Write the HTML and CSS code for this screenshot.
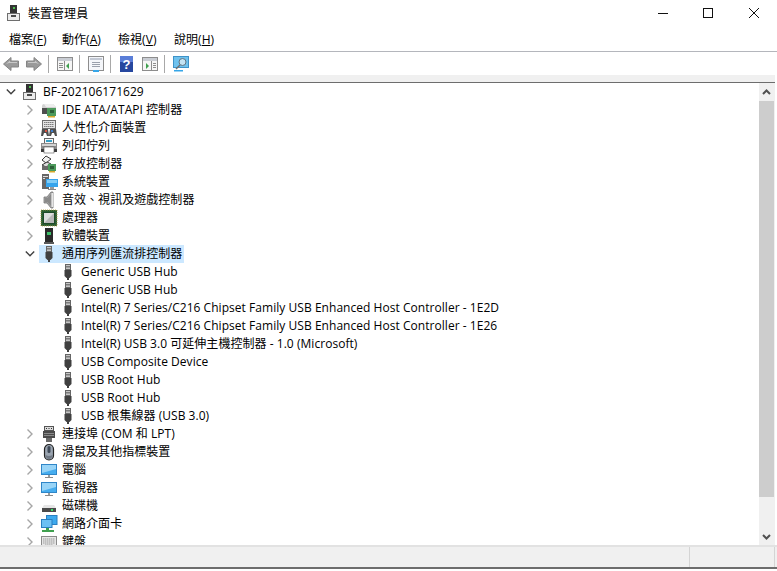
FILE: index.html
```html
<!DOCTYPE html>
<html lang="zh-Hant">
<head>
<meta charset="utf-8">
<title>裝置管理員</title>
<link rel="stylesheet" href="styles.css">
</head>
<body>
<svg class="defs" width="0" height="0" aria-hidden="true">
  <defs>
    <symbol id="i-pc" viewBox="0 0 16 16">
      <rect x="3" y="0" width="7" height="9" fill="#333"/>
      <rect x="6" y="2" width="2" height="2" fill="#4fc04f"/>
      <rect x="0" y="8" width="13" height="8" fill="#6e6e6e"/>
      <rect x="1" y="9" width="11" height="6" fill="#ececec"/>
      <rect x="4" y="10" width="5" height="2" fill="#4a4a4a"/>
    </symbol>
    <symbol id="i-usb" viewBox="0 0 18 18">
      <rect x="6.500" y="1.500" width="5" height="5" fill="#c4c4c4" stroke="#666"/>
      <rect x="7.500" y="3" width="1" height="1.500" fill="#333"/>
      <rect x="9.500" y="3" width="1" height="1.500" fill="#333"/>
      <path d="M5.500 7h7v6l-2 2h-3l-2-2z" fill="#404040"/>
      <rect x="8" y="15" width="2" height="2" fill="#404040"/>
    </symbol>
    <symbol id="i-ide" viewBox="0 0 18 18">
      <path d="M2 5q0-2 2-2h9l3 3v1H5v6H2z" fill="#d2d2d2"/>
      <path d="M4 3h9l3 3H6z" fill="#eee"/>
      <rect x="2" y="7" width="7" height="6" fill="#4f4f4f"/>
      <rect x="7" y="7" width="9" height="8" fill="#4d9a5c"/>
      <rect x="10" y="9" width="4" height="3" fill="#2c5f37"/>
      <rect x="8" y="15" width="7" height="1.500" fill="#d8a92c"/>
    </symbol>
    <symbol id="i-hid" viewBox="0 0 18 18">
      <rect x="2.500" y="1.500" width="13" height="8" fill="#e4e4e4" stroke="#6e6e6e"/>
      <path d="M4 3.500h10M4 5.500h10M4 7.500h10" stroke="#7c7c7c" stroke-dasharray="1.500 .5"/>
      <path d="M1 17l1-7h6l1 7H7l-1-3H4l-1 3z" fill="#4f4f4f"/>
      <path d="M9 17l1-7h6l1 7h-2l-1-3h-2l-1 3z" fill="#4f4f4f"/>
      <rect x="5" y="11" width="2" height="2" fill="#d8503c"/>
      <rect x="11" y="11" width="2" height="2" fill="#3f7fd0"/>
    </symbol>
    <symbol id="i-printer" viewBox="0 0 18 18">
      <rect x="4.500" y="1.500" width="9" height="5" fill="#f6f6f6" stroke="#666"/>
      <rect x="6" y="3" width="6" height="2" fill="#36a0c8"/>
      <rect x="1" y="6" width="16" height="8" fill="#8a8a8a"/>
      <rect x="2" y="7" width="14" height="2" fill="#d2d2d2"/>
      <rect x="1" y="12" width="16" height="3" fill="#3c3c3c"/>
      <rect x="4" y="10" width="10" height="6" fill="#fff" stroke="#555" stroke-width=".6"/>
    </symbol>
    <symbol id="i-storage" viewBox="0 0 18 18">
      <path d="M6 1l5 3-5 4-4-3z" fill="#f2f2f2" stroke="#3a3a3a"/>
      <path d="M2 10l5-3 4 2-5 3z" fill="#dcdcdc" stroke="#3a3a3a"/>
      <rect x="2" y="11" width="6" height="4" fill="#6a6a6a"/>
      <rect x="8" y="9" width="8" height="7" fill="#4d9a5c"/>
      <rect x="10" y="11" width="4" height="3" fill="#2c5f37"/>
      <rect x="9" y="16" width="6" height="1.500" fill="#d8a92c"/>
    </symbol>
    <symbol id="i-system" viewBox="0 0 18 18">
      <rect x="2" y="1" width="7" height="15" fill="#666"/>
      <rect x="3" y="3" width="5" height="1" fill="#ddd"/>
      <rect x="3" y="5" width="2" height="1" fill="#ddd"/>
      <rect x="6" y="6" width="12" height="8" fill="#36a4ec"/>
      <rect x="7" y="7" width="10" height="3" fill="#82cdf6"/>
      <rect x="10" y="14" width="4" height="2" fill="#9a9a9a"/>
      <rect x="8" y="16" width="8" height="1" fill="#888"/>
    </symbol>
    <symbol id="i-speaker" viewBox="0 0 18 18">
      <path d="M4 6h3l4-5h2v16h-2l-4-5H4z" fill="#a5a5a5" stroke="#777" stroke-width=".8"/>
      <path d="M5 7h2.500L11 3v12l-3.500-4H5z" fill="#8a8a8a"/>
      <rect x="11.500" y="2" width="1.500" height="14" fill="#e6e6e6"/>
    </symbol>
    <symbol id="i-cpu" viewBox="0 0 18 18">
      <rect x="1" y="1" width="16" height="16" fill="#2c5e34"/>
      <rect x="1" y="1" width="16" height="16" fill="none" stroke="#b09a3a" stroke-width=".8" stroke-dasharray="1 1"/>
      <rect x="3" y="3" width="12" height="12" fill="#1f4a28"/>
      <rect x="4" y="4" width="10" height="10" fill="#dedede"/>
      <path d="M4 14L14 4v10z" fill="#b8b8b8"/>
    </symbol>
    <symbol id="i-soft" viewBox="0 0 18 18">
      <rect x="5" y="1" width="8" height="14" fill="#2a2a2a"/>
      <rect x="7" y="5" width="4" height="3" fill="#3fc06a"/>
      <rect x="4" y="15" width="10" height="2" fill="#5a5a5a"/>
    </symbol>
    <symbol id="i-port" viewBox="0 0 18 18">
      <rect x="4.500" y="1.500" width="9" height="4" fill="#dcdcdc" stroke="#555"/>
      <path d="M6 3.500h1M8.500 3.500h1M11 3.500h1" stroke="#333"/>
      <rect x="3" y="6" width="12" height="7" fill="#4b4b4b"/>
      <path d="M4 8.500h10M4 10.500h10" stroke="#8a8a8a"/>
      <rect x="6" y="13" width="6" height="4" fill="#6a6a6a"/>
    </symbol>
    <symbol id="i-mouse" viewBox="0 0 18 18">
      <rect x="4.500" y="1.500" width="9" height="15.500" rx="4.500" fill="#9aa4b0" stroke="#222" stroke-width="1.200"/>
      <rect x="7.500" y="3" width="3" height="7" rx="1.500" fill="#3f4a58"/>
      <path d="M5.500 12q3.500 2 7 0v1q-1 3-3.500 3t-3.500-3z" fill="#6f7884"/>
    </symbol>
    <symbol id="i-monitor" viewBox="0 0 18 18">
      <rect x="1.500" y="3.500" width="15" height="10" fill="#46adef" stroke="#2f86c8"/>
      <path d="M2 4h14v4L2 12z" fill="#98d4f7"/>
      <rect x="8" y="14" width="2" height="2" fill="#9a9a9a"/>
      <rect x="5" y="16" width="8" height="1" fill="#8a8a8a"/>
    </symbol>
    <symbol id="i-disk" viewBox="0 0 18 18">
      <path d="M4 8h10l2 3v4H2v-4z" fill="#e6e6e6"/>
      <rect x="2" y="11" width="14" height="4" fill="#4a4a4a"/>
      <rect x="11" y="12" width="2" height="2" fill="#3fe06a"/>
    </symbol>
    <symbol id="i-net" viewBox="0 0 18 18">
      <rect x="6.500" y="0.500" width="10.500" height="9" fill="#3da9ee" stroke="#2b7fc0"/>
      <rect x="1.500" y="4.500" width="10.500" height="8" fill="#6cc0f3" stroke="#2b7fc0"/>
      <rect x="6" y="13" width="3" height="2" fill="#3fa04f"/>
      <rect x="2" y="15" width="12" height="2" fill="#3fa04f"/>
    </symbol>
    <symbol id="i-kbd" viewBox="0 0 18 18">
      <rect x="1.500" y="3.500" width="15" height="11" fill="#e6e6e6" stroke="#8a8a8a"/>
      <path d="M3 6h12M3 8h12M3 10h12M5 12h8" stroke="#9a9a9a" stroke-dasharray="1.500 .5"/>
    </symbol>
    <symbol id="i-right" viewBox="0 0 10 10"><path d="M2.500 .5L7 5 2.500 9.500" fill="none" stroke="#a6a6a6" stroke-width="1.400"/></symbol>
    <symbol id="i-down" viewBox="0 0 10 10"><path d="M.8 2.500L5 6.700l4.200-4.200" fill="none" stroke="#404040" stroke-width="1.400"/></symbol>
  </defs>
</svg>

<div class="window">
  <header class="titlebar">
    <svg class="title-icon"><use href="#i-pc"/></svg>
    <span class="title-text">裝置管理員</span>
    <div class="controls">
      <svg class="ctl" viewBox="0 0 46 29"><path d="M19 13.500h10" stroke="#111" fill="none"/></svg>
      <svg class="ctl" viewBox="0 0 46 29"><rect x="18.500" y="8.500" width="9" height="9" stroke="#111" fill="none"/></svg>
      <svg class="ctl" viewBox="0 0 46 29"><path d="M18 8l10 10M28 8L18 18" stroke="#111" fill="none"/></svg>
    </div>
  </header>

  <nav class="menubar">
    <span class="menu">檔案(<u>F</u>)</span>
    <span class="menu">動作(<u>A</u>)</span>
    <span class="menu">檢視(<u>V</u>)</span>
    <span class="menu">說明(<u>H</u>)</span>
  </nav>

  <div class="toolbar">
    <svg class="tool t-back" viewBox="0 0 16 16"><path d="M.5 8L8 1.500V5h7.500v6H8v3.500z" fill="#9a9a9a" stroke="#858585"/><path d="M3 8l4-3.500V6h7v1H6z" fill="#c8c8c8"/></svg>
    <svg class="tool t-forward" viewBox="0 0 16 16"><path d="M15.500 8L8 1.500V5H.5v6H8v3.500z" fill="#9a9a9a" stroke="#858585"/><path d="M13 8L9 4.500V6H2v1h8z" fill="#c8c8c8"/></svg>
    <i class="tsep"></i>
    <svg class="tool" viewBox="0 0 16 16"><rect x=".5" y="1.500" width="15" height="13" fill="#f6f6f6" stroke="#8d8d8d"/><rect x="1" y="2" width="14" height="3" fill="#c9cdd4"/><path d="M7.500 5v9" stroke="#8d8d8d"/><path d="M12 7l-3 3 3 3z" fill="#3fa04f"/><path d="M2 7.500h4M2 9.500h4M2 11.500h4" stroke="#8d8d8d"/></svg>
    <i class="tsep"></i>
    <svg class="tool" viewBox="0 0 16 16"><rect x=".5" y=".5" width="15" height="14" fill="#f4f6fa" stroke="#8d8d8d"/><rect x="2" y="2" width="12" height="2" fill="#c2c8d4"/><path d="M4 6.500h8M4 8.500h8M4 10.500h8" stroke="#9aa0ac"/><rect x="5" y="14" width="6" height="2" fill="#36a6e8"/></svg>
    <i class="tsep"></i>
    <svg class="tool t-help" viewBox="0 0 16 16"><rect x="1" y="0" width="13" height="16" fill="#26479f"/><rect x="1" y="0" width="13" height="6" fill="#5a7ed8"/><text class="help-q" x="7.500" y="13" text-anchor="middle">?</text></svg>
    <svg class="tool" viewBox="0 0 16 16"><rect x=".5" y="1.500" width="15" height="13" fill="#f6f6f6" stroke="#8d8d8d"/><rect x="1" y="2" width="14" height="3" fill="#c9cdd4"/><path d="M9.500 5v9" stroke="#8d8d8d"/><path d="M4 7l3 3-3 3z" fill="#3fa04f"/><path d="M11 7.500h3M11 9.500h3M11 11.500h3" stroke="#8d8d8d"/></svg>
    <i class="tsep"></i>
    <svg class="tool" viewBox="0 0 16 16"><rect x=".5" y=".5" width="15" height="11" fill="#6fc2ee" stroke="#3f93c8"/><circle cx="9.500" cy="6" r="3.500" fill="#c4e4f4" stroke="#5f7482"/><path d="M7 9l-4 4" stroke="#6f6f6f" stroke-width="1.500"/><rect x="1" y="14" width="9" height="1.500" fill="#36a6e8"/></svg>
  </div>

  <div class="band"></div>

  <main class="content">
    <div class="tree">
      <div class="row root"><svg class="chev"><use href="#i-down"/></svg><svg class="ico ico-root"><use href="#i-pc"/></svg><span>BF-202106171629</span></div>
      <div class="row"><svg class="chev"><use href="#i-right"/></svg><svg class="ico"><use href="#i-ide"/></svg><span>IDE ATA/ATAPI 控制器</span></div>
      <div class="row"><svg class="chev"><use href="#i-right"/></svg><svg class="ico"><use href="#i-hid"/></svg><span>人性化介面裝置</span></div>
      <div class="row"><svg class="chev"><use href="#i-right"/></svg><svg class="ico"><use href="#i-printer"/></svg><span>列印佇列</span></div>
      <div class="row"><svg class="chev"><use href="#i-right"/></svg><svg class="ico"><use href="#i-storage"/></svg><span>存放控制器</span></div>
      <div class="row"><svg class="chev"><use href="#i-right"/></svg><svg class="ico"><use href="#i-system"/></svg><span>系統裝置</span></div>
      <div class="row"><svg class="chev"><use href="#i-right"/></svg><svg class="ico"><use href="#i-speaker"/></svg><span>音效、視訊及遊戲控制器</span></div>
      <div class="row"><svg class="chev"><use href="#i-right"/></svg><svg class="ico"><use href="#i-cpu"/></svg><span>處理器</span></div>
      <div class="row"><svg class="chev"><use href="#i-right"/></svg><svg class="ico"><use href="#i-soft"/></svg><span>軟體裝置</span></div>
      <div class="row"><svg class="chev"><use href="#i-down"/></svg><div class="selected"><svg class="ico"><use href="#i-usb"/></svg><span>通用序列匯流排控制器</span></div></div>
      <div class="row child"><svg class="ico"><use href="#i-usb"/></svg><span>Generic USB Hub</span></div>
      <div class="row child"><svg class="ico"><use href="#i-usb"/></svg><span>Generic USB Hub</span></div>
      <div class="row child"><svg class="ico"><use href="#i-usb"/></svg><span>Intel(R) 7 Series/C216 Chipset Family USB Enhanced Host Controller - 1E2D</span></div>
      <div class="row child"><svg class="ico"><use href="#i-usb"/></svg><span>Intel(R) 7 Series/C216 Chipset Family USB Enhanced Host Controller - 1E26</span></div>
      <div class="row child"><svg class="ico"><use href="#i-usb"/></svg><span>Intel(R) USB 3.0 可延伸主機控制器 - 1.0 (Microsoft)</span></div>
      <div class="row child"><svg class="ico"><use href="#i-usb"/></svg><span>USB Composite Device</span></div>
      <div class="row child"><svg class="ico"><use href="#i-usb"/></svg><span>USB Root Hub</span></div>
      <div class="row child"><svg class="ico"><use href="#i-usb"/></svg><span>USB Root Hub</span></div>
      <div class="row child"><svg class="ico"><use href="#i-usb"/></svg><span>USB 根集線器 (USB 3.0)</span></div>
      <div class="row"><svg class="chev"><use href="#i-right"/></svg><svg class="ico"><use href="#i-port"/></svg><span>連接埠 (COM 和 LPT)</span></div>
      <div class="row"><svg class="chev"><use href="#i-right"/></svg><svg class="ico"><use href="#i-mouse"/></svg><span>滑鼠及其他指標裝置</span></div>
      <div class="row"><svg class="chev"><use href="#i-right"/></svg><svg class="ico"><use href="#i-monitor"/></svg><span>電腦</span></div>
      <div class="row"><svg class="chev"><use href="#i-right"/></svg><svg class="ico"><use href="#i-monitor"/></svg><span>監視器</span></div>
      <div class="row"><svg class="chev"><use href="#i-right"/></svg><svg class="ico"><use href="#i-disk"/></svg><span>磁碟機</span></div>
      <div class="row"><svg class="chev"><use href="#i-right"/></svg><svg class="ico"><use href="#i-net"/></svg><span>網路介面卡</span></div>
      <div class="row"><svg class="chev"><use href="#i-right"/></svg><svg class="ico"><use href="#i-kbd"/></svg><span>鍵盤</span></div>
    </div>
    <div class="scrollbar">
      <svg class="sb-arrow" viewBox="0 0 15 18"><path d="M4 11l3.500-3.500L11 11" fill="none" stroke="#505050" stroke-width="2"/></svg>
      <div class="sb-thumb"></div>
      <div class="sb-fill"></div>
      <svg class="sb-arrow" viewBox="0 0 15 18"><path d="M4 8l3.500 3.500L11 8" fill="none" stroke="#505050" stroke-width="2"/></svg>
    </div>
  </main>

  <footer class="statusbar">
    <div class="status status-main"></div>
    <div class="status status-side"></div>
  </footer>
</div>
</body>
</html>
```
FILE: styles.css
```css
* { box-sizing: border-box; }
html, body { margin: 0; padding: 0; background: #fff; overflow: hidden; }
body {
  width: 777px;
  height: 571px;
  font-family: "Open Sans", "Noto Sans CJK TC", sans-serif;
  font-size: 12px;
  letter-spacing: .04px;
  color: #000;
}
.defs { position: absolute; }
.window { width: 777px; height: 571px; display: flex; flex-direction: column; }

.titlebar { height: 29px; display: flex; align-items: flex-start; padding-left: 7px; flex: none; }
.title-icon { width: 16px; height: 16px; margin-top: 5px; flex: none; }
.title-text { margin-left: 5px; line-height: 28px; }
.controls { margin-left: auto; display: flex; }
.ctl { width: 46px; height: 29px; display: block; }

.menubar { height: 22px; display: flex; flex: none; padding-left: 9px; gap: 16px; align-items: flex-start; }
.menu { white-space: nowrap; line-height: 22px; width: 40px; }
.menu:first-child { width: 37px; }

.toolbar {
  height: 24px; flex: none; display: flex; align-items: center;
  padding: 1px 0 0 3px; border-top: 1px solid #b4b6bc;
}
.tool { width: 16px; height: 16px; margin: 0 6px 0 8px; flex: none; }
.t-back { margin: 0 7px 0 0; }
.t-forward { margin: 0 6px 0 0; }
.t-help { margin-right: 7px; }
.tsep { width: 1px; height: 18px; background: #a8a8a8; flex: none; }
.help-q { font: 700 13px "Liberation Sans", sans-serif; fill: #fff; }
.t-help + .tool { margin-left: 0; }

.band { height: 8px; flex: none; background: #f0f0f0; border-bottom: 1px solid #6d6d6d; width: 775px; }

.content { flex: 1; min-height: 0; display: flex; width: 775px; }
.tree { flex: 1; min-width: 0; overflow: hidden; }
.row { height: 18px; display: flex; align-items: center; padding-left: 23px; white-space: nowrap; }
.row.root { padding-left: 4px; }
.row.child { padding-left: 59px; }
.chev { width: 14px; height: 10px; flex: none; }
.ico { width: 18px; height: 18px; margin-left: 3px; flex: none; }
.ico-root { width: 16px; height: 16px; margin-left: 5px; }
.row span { margin-left: 4px; line-height: 18px; }
.row.child .ico { margin: 0; }
.selected { display: flex; align-items: center; background: #cce8ff; height: 18px; padding: 0 2px 0 1px; margin-left: 2px; }
.selected .ico { margin-left: 0; }

.scrollbar { width: 16px; flex: none; background: #f0f0f0; display: flex; flex-direction: column; }
.sb-arrow { width: 15px; height: 18px; flex: none; display: block; }
.sb-thumb { width: 15px; height: 396px; background: #cdcdcd; flex: none; }
.sb-fill { flex: 1; }

.statusbar {
  height: 24px; flex: none; display: flex; background: #f0f0f0;
  border-top: 2px solid #e2e2e2; border-bottom: 2px solid #6d6d6d;
  width: 777px; margin-bottom: 2px;
}
.status { height: 100%; border-right: 1px solid #d4d4d4; }
.status-main { width: 690px; }
.status-side { width: 85px; }
```
